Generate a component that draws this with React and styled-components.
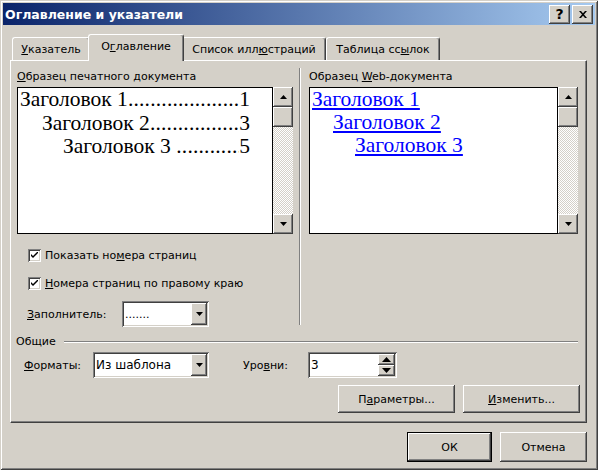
import React from 'react';
import styled, { createGlobalStyle, css } from 'styled-components';

const GlobalStyle = createGlobalStyle`
  html, body { margin: 0; padding: 0; background: #d4d0c8; }
  body {
    font-family: Tahoma, "DejaVu Sans", sans-serif;
    font-size: 11px;
    color: #000;
  }
  * { box-sizing: border-box; }
`;

const raised = css`
  background: #d4d0c8;
  box-shadow: inset -1px -1px #404040, inset 1px 1px #ffffff, inset -2px -2px #808080, inset 2px 2px #d4d0c8;
`;

const sunken = css`
  background: #fff;
  box-shadow: inset 1px 1px #808080, inset -1px -1px #ffffff, inset 2px 2px #404040, inset -2px -2px #d4d0c8;
`;

const Window = styled.div`
  width: 598px;
  height: 470px;
  padding: 3px;
  background: #d4d0c8;
  box-shadow: inset 1px 1px #d4d0c8, inset -1px -1px #404040, inset 2px 2px #ffffff, inset -2px -2px #808080;
  display: flex;
  flex-direction: column;
  overflow: hidden;
`;

const TitleBar = styled.div`
  height: 22px;
  display: flex;
  align-items: center;
  padding: 0 2px;
  background: linear-gradient(to right, #0a246a, #a6caf0);
  color: #fff;
  font-weight: bold;
  font-size: 12.5px;
`;

const TitleText = styled.span`
  flex: 1;
  white-space: nowrap;
`;

const TitleButtons = styled.div`
  display: flex;
  gap: 2px;
`;

const TitleButton = styled.div`
  ${raised};
  width: 21px;
  height: 19px;
  display: flex;
  align-items: center;
  justify-content: center;
  color: #000;
  font-weight: bold;
  font-size: 14px;
  font-family: "DejaVu Sans", sans-serif;
`;

const TabRow = styled.div`
  margin-top: 10px;
  padding-left: 9px;
  height: 26px;
  display: flex;
  align-items: flex-end;
  margin-bottom: -1px;
  position: relative;
  z-index: 1;
`;

const Tab = styled.div`
  width: ${p => p.$w}px;
  height: ${p => (p.$active ? 27 : 23)}px;
  margin: ${p => (p.$active ? '0 -2px 0 -2px' : '0 0 1px 0')};
  background: #d4d0c8;
  border-top: 1px solid #fff;
  border-left: 1px solid #fff;
  border-right: 1px solid #404040;
  border-radius: 3px 3px 0 0;
  box-shadow: inset -1px 0 #808080;
  display: flex;
  align-items: center;
  justify-content: center;
  padding-bottom: ${p => (p.$active ? 3 : 0)}px;
  position: relative;
  z-index: ${p => (p.$active ? 2 : 0)};
  white-space: nowrap;
`;

const Panel = styled.div`
  margin-left: 7px;
  width: 577px;
  height: 363px;
  border-top: 1px solid #fff;
  border-left: 1px solid #fff;
  border-right: 1px solid #404040;
  border-bottom: 1px solid #404040;
  box-shadow: inset -1px -1px #808080;
  padding: 9px 8px 0 6px;
  display: flex;
  flex-direction: column;
`;

const Columns = styled.div`
  display: flex;
`;

const Column = styled.div`
  width: ${p => p.$w}px;
  min-width: 0;
  display: flex;
  flex-direction: column;
`;

const VSeparator = styled.div`
  width: 2px;
  margin: -2px 8px 2px 6px;
  border-left: 1px solid #808080;
  border-right: 1px solid #fff;
`;

const Label = styled.div`
  height: 13px;
  line-height: 13px;
  white-space: nowrap;
`;

const SectionLabel = styled(Label)`
  margin-bottom: 4px;
`;

const Preview = styled.div`
  height: 147px;
  display: flex;
`;

const PreviewPage = styled.div`
  flex: 1;
  min-width: 0;
  overflow: hidden;
  border: 1px solid #000;
  background: #fff;
  padding: ${p => p.$pt}px 22px 0 2px;
  font-family: "Liberation Serif", "Times New Roman", serif;
  font-size: ${p => p.$fs}px;
  line-height: ${p => p.$lh}px;
`;

const TocLine = styled.div`
  display: flex;
  padding-left: ${p => p.$indent}px;
  white-space: nowrap;
`;

const TocTitle = styled.span`
  white-space: pre;
  flex: none;
`;

const Leader = styled.span`
  flex: 1;
  min-width: 0;
  overflow: hidden;
  white-space: nowrap;
  letter-spacing: 0.2px;
`;

const WebLine = styled.div`
  padding-left: ${p => p.$indent}px;
  white-space: nowrap;
`;

const WebLink = styled.span`
  color: #0000ff;
  text-decoration: underline;
  text-underline-offset: 2px;
`;

const ScrollBar = styled.div`
  width: 20px;
  flex: none;
  display: flex;
  flex-direction: column;
`;

const ScrollBtn = styled.div`
  ${raised};
  height: ${p => p.$h}px;
  display: flex;
  align-items: center;
  justify-content: center;
`;

const Track = styled.div`
  flex: 1;
  background-image: repeating-conic-gradient(#d4d0c8 0% 25%, #ffffff 0% 50%);
  background-size: 2px 2px;
`;

const CheckRow = styled.label`
  margin-top: ${p => p.$mt}px;
  margin-left: 11px;
  height: 13px;
  display: flex;
  align-items: center;
  gap: 4px;
  white-space: nowrap;
`;

const CheckBox = styled.span`
  ${sunken};
  width: 13px;
  height: 13px;
  display: flex;
  align-items: center;
  justify-content: center;
`;

const FieldRow = styled.div`
  display: flex;
  align-items: center;
  margin-top: ${p => p.$mt}px;
  margin-left: ${p => p.$ml}px;
`;

const FieldLabel = styled.span`
  width: ${p => p.$w}px;
  margin-left: ${p => p.$ml || 0}px;
  white-space: nowrap;
`;

const Combo = styled.div`
  ${sunken};
  width: ${p => p.$w}px;
  height: 26px;
  padding: 2px;
  display: flex;
  align-items: center;
`;

const ComboText = styled.span`
  flex: 1;
  padding-left: 1px;
  font-size: ${p => (p.$big ? 12 : 11)}px;
  white-space: nowrap;
`;

const DropBtn = styled.div`
  ${raised};
  width: 16px;
  height: 22px;
  display: flex;
  align-items: center;
  justify-content: center;
`;

const SpinBtns = styled.div`
  width: 17px;
  height: 22px;
  display: flex;
  flex-direction: column;
`;

const SpinBtn = styled.div`
  ${raised};
  flex: 1;
  display: flex;
  align-items: center;
  justify-content: center;
`;

const GroupHeader = styled.div`
  margin-top: 8px;
  margin-left: -1px;
  display: flex;
  align-items: center;
  gap: 8px;
  height: 13px;
`;

const GroupLine = styled.div`
  flex: 1;
  height: 2px;
  border-top: 1px solid #808080;
  border-bottom: 1px solid #fff;
`;

const ButtonRow = styled.div`
  display: flex;
  justify-content: flex-end;
  gap: 8px;
  margin-top: ${p => p.$mt}px;
  margin-right: ${p => p.$mr}px;
`;

const Button = styled.div`
  ${raised};
  width: ${p => p.$w}px;
  height: ${p => p.$h}px;
  display: flex;
  align-items: center;
  justify-content: center;
  white-space: nowrap;
  ${p =>
    p.$default &&
    css`
      box-shadow: inset 0 0 0 1px #000, inset -2px -2px #404040, inset 2px 2px #ffffff,
        inset -3px -3px #808080, inset 3px 3px #d4d0c8;
    `}
`;

const Arrow = ({ dir = 'down', size = 7 }) => {
  const h = Math.ceil(size / 2);
  const pts = dir === 'down' ? `0,0 ${size},0 ${size / 2},${h}` : `0,${h} ${size},${h} ${size / 2},0`;
  return (
    <svg width={size} height={h} viewBox={`0 0 ${size} ${h}`} style={{ display: 'block' }}>
      <polygon points={pts} fill="#000" />
    </svg>
  );
};

const Check = () => (
  <svg width="7" height="7" viewBox="0 0 7 7" style={{ display: 'block' }}>
    <path d="M0 2 L0 4 L2 6 L7 1 L7 -1 L2 4 Z" fill="#000" />
  </svg>
);

const ScrollV = () => (
  <ScrollBar>
    <ScrollBtn $h={20}><Arrow dir="up" /></ScrollBtn>
    <ScrollBtn $h={20} />
    <Track />
    <ScrollBtn $h={20}><Arrow dir="down" /></ScrollBtn>
  </ScrollBar>
);

const DOTS = '.'.repeat(60);

const tocLines = [
  { t: 'Заголовок 1', p: '1', i: 0 },
  { t: 'Заголовок 2', p: '3', i: 22 },
  { t: 'Заголовок 3 ', p: '5', i: 43 },
];

export default function App() {
  return (
    <>
      <GlobalStyle />
      <Window>
        <TitleBar>
          <TitleText>Оглавление и указатели</TitleText>
          <TitleButtons>
            <TitleButton>?</TitleButton>
            <TitleButton>
              <svg width="8" height="7" viewBox="0 0 8 7">
                <path d="M0 0 L2 0 L4 2.3 L6 0 L8 0 L5 3.5 L8 7 L6 7 L4 4.7 L2 7 L0 7 L3 3.5 Z" fill="#000" />
              </svg>
            </TitleButton>
          </TitleButtons>
        </TitleBar>

        <TabRow>
          <Tab $w={78}><span><u>У</u>казатель</span></Tab>
          <Tab $w={96} $active><span>О<u>г</u>лавление</span></Tab>
          <Tab $w={144}><span>Список илл<u>ю</u>страций</span></Tab>
          <Tab $w={114}><span>Таблица сс<u>ы</u>лок</span></Tab>
        </TabRow>

        <Panel>
          <Columns>
            <Column $w={276}>
              <SectionLabel><u>О</u>бразец печатного документа</SectionLabel>
              <Preview>
                <PreviewPage $fs={21.5} $lh={23.5} $pt={0}>
                  {tocLines.map(l => (
                    <TocLine key={l.t} $indent={l.i}>
                      <TocTitle>{l.t}</TocTitle>
                      <Leader>{DOTS}</Leader>
                      <span>{l.p}</span>
                    </TocLine>
                  ))}
                </PreviewPage>
                <ScrollV />
              </Preview>
              <CheckRow $mt={15}>
                <CheckBox><Check /></CheckBox>
                <span>Показать но<u>м</u>ера страниц</span>
              </CheckRow>
              <CheckRow $mt={15}>
                <CheckBox><Check /></CheckBox>
                <span><u>Н</u>омера страниц по правому краю</span>
              </CheckRow>
              <FieldRow $mt={11} $ml={10}>
                <FieldLabel $w={95}><u>З</u>аполнитель:</FieldLabel>
                <Combo $w={87}>
                  <ComboText>.......</ComboText>
                  <DropBtn><Arrow dir="down" /></DropBtn>
                </Combo>
              </FieldRow>
            </Column>
            <VSeparator />
            <Column $w={269}>
              <SectionLabel>Образец <u>W</u>eb-документа</SectionLabel>
              <Preview>
                <PreviewPage $fs={21.5} $lh={23} $pt={0}>
                  <WebLine $indent={0}><WebLink>Заголовок 1</WebLink></WebLine>
                  <WebLine $indent={21}><WebLink>Заголовок 2</WebLink></WebLine>
                  <WebLine $indent={43}><WebLink>Заголовок 3</WebLink></WebLine>
                </PreviewPage>
                <ScrollV />
              </Preview>
            </Column>
          </Columns>

          <GroupHeader>
            <span>Общие</span>
            <GroupLine />
          </GroupHeader>

          <FieldRow $mt={4} $ml={7}>
            <FieldLabel $w={69}><u>Ф</u>орматы:</FieldLabel>
            <Combo $w={116}>
              <ComboText $big>Из шаблона</ComboText>
              <DropBtn><Arrow dir="down" /></DropBtn>
            </Combo>
            <FieldLabel $w={65} $ml={34}>Уро<u>в</u>ни:</FieldLabel>
            <Combo $w={89}>
              <ComboText $big>3</ComboText>
              <SpinBtns>
                <SpinBtn><Arrow dir="up" size={9} /></SpinBtn>
                <SpinBtn><Arrow dir="down" size={9} /></SpinBtn>
              </SpinBtns>
            </Combo>
          </FieldRow>

          <ButtonRow $mt={7} $mr={-2}>
            <Button $w={117} $h={28}>П<u>а</u>раметры...</Button>
            <Button $w={117} $h={28}><u>И</u>зменить...</Button>
          </ButtonRow>
        </Panel>

        <ButtonRow $mt={9} $mr={8}>
          <Button $w={85} $h={30} $default>ОК</Button>
          <Button $w={87} $h={30}>Отмена</Button>
        </ButtonRow>
      </Window>
    </>
  );
}
